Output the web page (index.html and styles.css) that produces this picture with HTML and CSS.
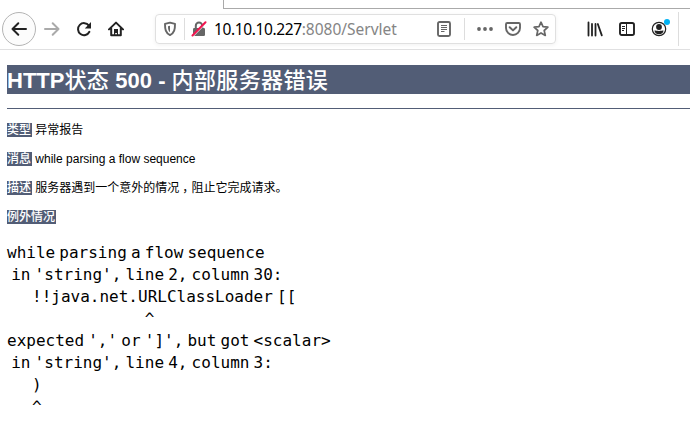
FILE: index.html
```html
<!DOCTYPE html>
<html lang="zh-CN">
<head>
<meta charset="utf-8">
<title>HTTP状态 500 - 内部服务器错误</title>
<link rel="stylesheet" href="styles.css">
</head>
<body>
<div class="tabs"><div class="tab-edge"></div></div>
<header class="toolbar">
  <div class="back"><svg width="16" height="16" viewBox="0 0 16 16"><path d="M15 8H1.5M7.3 2.3L1.5 8l5.8 5.7" fill="none" stroke="#222" stroke-width="2" stroke-linecap="round" stroke-linejoin="round"/></svg></div>
  <svg class="forward" width="16" height="16" viewBox="0 0 16 16"><path d="M1 8h13.5M8.7 2.3L14.5 8l-5.8 5.7" fill="none" stroke="#aaa" stroke-width="2" stroke-linecap="round" stroke-linejoin="round"/></svg>
  <svg class="reload" width="16" height="16" viewBox="0 0 16 16"><path d="M12.9 4.6A6 6 0 1 0 13.4 10.8" fill="none" stroke="#222" stroke-width="2" stroke-linecap="round"/><path d="M15 1v6.4H8.8z" fill="#222"/></svg>
  <svg class="home" width="16" height="16" viewBox="0 0 16 16"><path d="M1 8.4L8 1.6l7 6.8M3.2 7.5v6.7h9.6V7.5" fill="none" stroke="#222" stroke-width="2" stroke-linecap="round" stroke-linejoin="round"/><path d="M6 8h4v6.5H8.9V12H7.2v2.5H6z" fill="#222"/></svg>
  <div class="urlbar">
    <svg class="shield" width="14" height="16" viewBox="0 0 14 16"><path d="M7 1.6L12 2.9c0 5.3-.5 9-5 11.2C2.5 11.9 2 8.2 2 2.9z" fill="none" stroke="#666" stroke-width="1.9" stroke-linejoin="round"/><path d="M7 4.7L5 5.2c0 3 .3 4.6 2 6z" fill="#666"/></svg>
    <span class="rule"></span>
    <svg class="lock" width="16" height="16" viewBox="0 0 16 16"><path d="M4.8 8V4.7a3.2 3.2 0 0 1 6.4 0V8" fill="none" stroke="#666" stroke-width="2"/><rect x="2" y="7" width="12" height="8" rx="1.2" fill="#666"/><path d="M1.9 15.3L15 2" stroke="#fff" stroke-width="1.2"/><path d="M1.5 14.5L14.5 1.2" stroke="#f0154f" stroke-width="2" stroke-linecap="round"/></svg>
    <div class="url"><span class="host">10.10.10.227</span><span class="path">:8080/Servlet</span></div>
    <svg class="reader" width="16" height="16" viewBox="0 0 16 16"><rect x="2" y="1" width="12" height="14" rx="1.5" fill="none" stroke="#666" stroke-width="1.9"/><path d="M5 4.5h6M5 6.5h6M5 8.5h6M5 10.5h3.5" stroke="#666"/></svg>
    <span class="rule rule-right"></span>
    <svg class="dots" width="16" height="16" viewBox="0 0 16 16"><g fill="#666"><circle cx="2" cy="8" r="1.9"/><circle cx="8" cy="8" r="1.9"/><circle cx="14" cy="8" r="1.9"/></g></svg>
    <svg class="pocket" width="16" height="16" viewBox="0 0 16 16"><path d="M2.2 2h11.6q1.2 0 1.2 1.2V7A7 7 0 0 1 1 7V3.2Q1 2 2.2 2z" fill="none" stroke="#666" stroke-width="1.9"/><path d="M4.7 6.2L8 9.400l3.300-3.200" fill="none" stroke="#666" stroke-width="2" stroke-linecap="round" stroke-linejoin="round"/></svg>
    <svg class="star" width="16" height="16" viewBox="0 0 16 16"><path d="M8 1.2l2 4.5 4.9.5-3.7 3.3 1.1 4.9L8 11.9l-4.3 2.5 1.1-4.9L1.1 6.2 6 5.7z" fill="none" stroke="#666" stroke-width="1.7" stroke-linejoin="round"/></svg>
  </div>
  <svg class="library" width="16" height="16" viewBox="0 0 16 16"><path d="M1.5 1.5v13M5 3v11.500M8.500 3v11.500M10.800 3l4 11.400" stroke="#222" stroke-width="1.8" stroke-linecap="round"/></svg>
  <svg class="sidebar" width="16" height="16" viewBox="0 0 16 16"><rect x="1" y="2" width="14" height="12" rx="1.8" fill="none" stroke="#222" stroke-width="1.9"/><path d="M7.500 2v12" stroke="#222"/><path d="M3 5.500h3M3 7.500h3M3 9.500h2" stroke="#222"/></svg>
  <div class="account"><svg width="16" height="16" viewBox="0 0 16 16"><circle cx="8" cy="8" r="6.700" fill="none" stroke="#222" stroke-width="1.200"/><circle cx="8" cy="6" r="2.900" fill="#222"/><path d="M3.500 9.500C4.500 9.500 5.500 9.900 8 9.900s3.500-.4 4.500-.4c0 2-1.800 3.800-4.500 3.800S3.500 11.500 3.500 9.500z" fill="#222"/></svg><i class="badge"></i></div>
  <span class="end-rule"></span>
</header>
<main>
  <h1>HTTP<span>状态</span> 500 - <span>内部服务器错误</span></h1>
  <hr>
  <p><b>类型</b> 异常报告</p>
  <p><b>消息</b> while parsing a flow sequence</p>
  <p><b>描述</b> 服务器遇到一个意外的情况<span class="comma">，</span>阻止它完成请求。</p>
  <p><b>例外情况</b></p>
<pre>while parsing a flow sequence
 in 'string', line 2, column 30:
      !!java.net.URLClassLoader [[
                                 ^
expected ',' or ']', but got &lt;scalar&gt;
 in 'string', line 4, column 3:
      )
      ^
</pre>
</main>
</body>
</html>
```
FILE: styles.css
```css
* { box-sizing: border-box; }
html { overflow: hidden; }
body { margin: 0; width: 690px; height: 425px; overflow: hidden; background: #fff; color: #000; }
svg { display: block; flex: none; }
.tabs { height: 9px; }
.tab-edge { height: 9px; margin-left: 223px; border-left: 1px solid #aaa; border-bottom: 1px solid #aaa; }
.toolbar { display: flex; align-items: center; height: 41px; border-bottom: 1px solid #e0e0e1; }
.back { display: flex; align-items: center; justify-content: center; flex: none; width: 34px; height: 34px; margin-left: 2px; border: 1px solid #b4b4b4; border-radius: 50%; background: #fcfcfc; }
.forward { margin-left: 8px; }
.reload { margin-left: 16px; }
.home { margin-left: 16px; }
.urlbar { display: flex; flex: none; align-items: center; width: 401px; height: 30px; margin-left: 31px; border: 1px solid #e0e0e0; border-radius: 4px; box-shadow: 0 1px 4px rgba(0,0,0,.06); }
.shield { margin-left: 7px; }
.rule { width: 1px; height: 22px; margin-left: 7px; background: #ddd; }
.lock { margin-left: 6px; }
.url { width: 222px; margin-left: 7px; font: 15.5px/20px "Noto Sans", sans-serif; white-space: nowrap; }
.host { letter-spacing: -.38px; }
.path { color: #858585; letter-spacing: 0; }
.reader { flex: none; }
.rule-right { margin-left: 12px; }
.dots { margin-left: 12px; }
.pocket { margin-left: 12px; }
.star { margin-left: 12px; }
.library { margin-left: 31px; }
.sidebar { margin-left: 16px; }
.account { position: relative; margin-left: 16px; }
.badge { position: absolute; top: -2px; right: -3px; width: 6px; height: 6px; border-radius: 50%; background: #00b3f4; }
.end-rule { width: 1px; height: 34px; margin-left: 11px; background: #ddd; }
main { padding: 15px 0 0 7px; font-family: "Liberation Sans", "Noto Sans CJK SC", sans-serif; }
h1 { height: 29px; margin: 0; overflow: hidden; background: #525d76; color: #fff; font-size: 22px; line-height: 31px; white-space: nowrap; }
h1 span { font-weight: 500; letter-spacing: .37px; }
hr { height: 1px; margin: 14px 0; border: 0; background: #525d76; }
p { height: 15px; margin: 0 0 14px; font-size: 12px; line-height: 15px; white-space: nowrap; }
b { display: inline-block; height: 14px; padding-right: 1px; background: #525d76; color: #fff; font-weight: 500; line-height: 15px; vertical-align: top; }
.comma { padding: 0 3px; font-feature-settings: "halt" 1; }
pre { margin: 0; padding-top: 3px; font: 16px/22px "DejaVu Sans Mono", monospace; word-spacing: -5.46px; }
```
